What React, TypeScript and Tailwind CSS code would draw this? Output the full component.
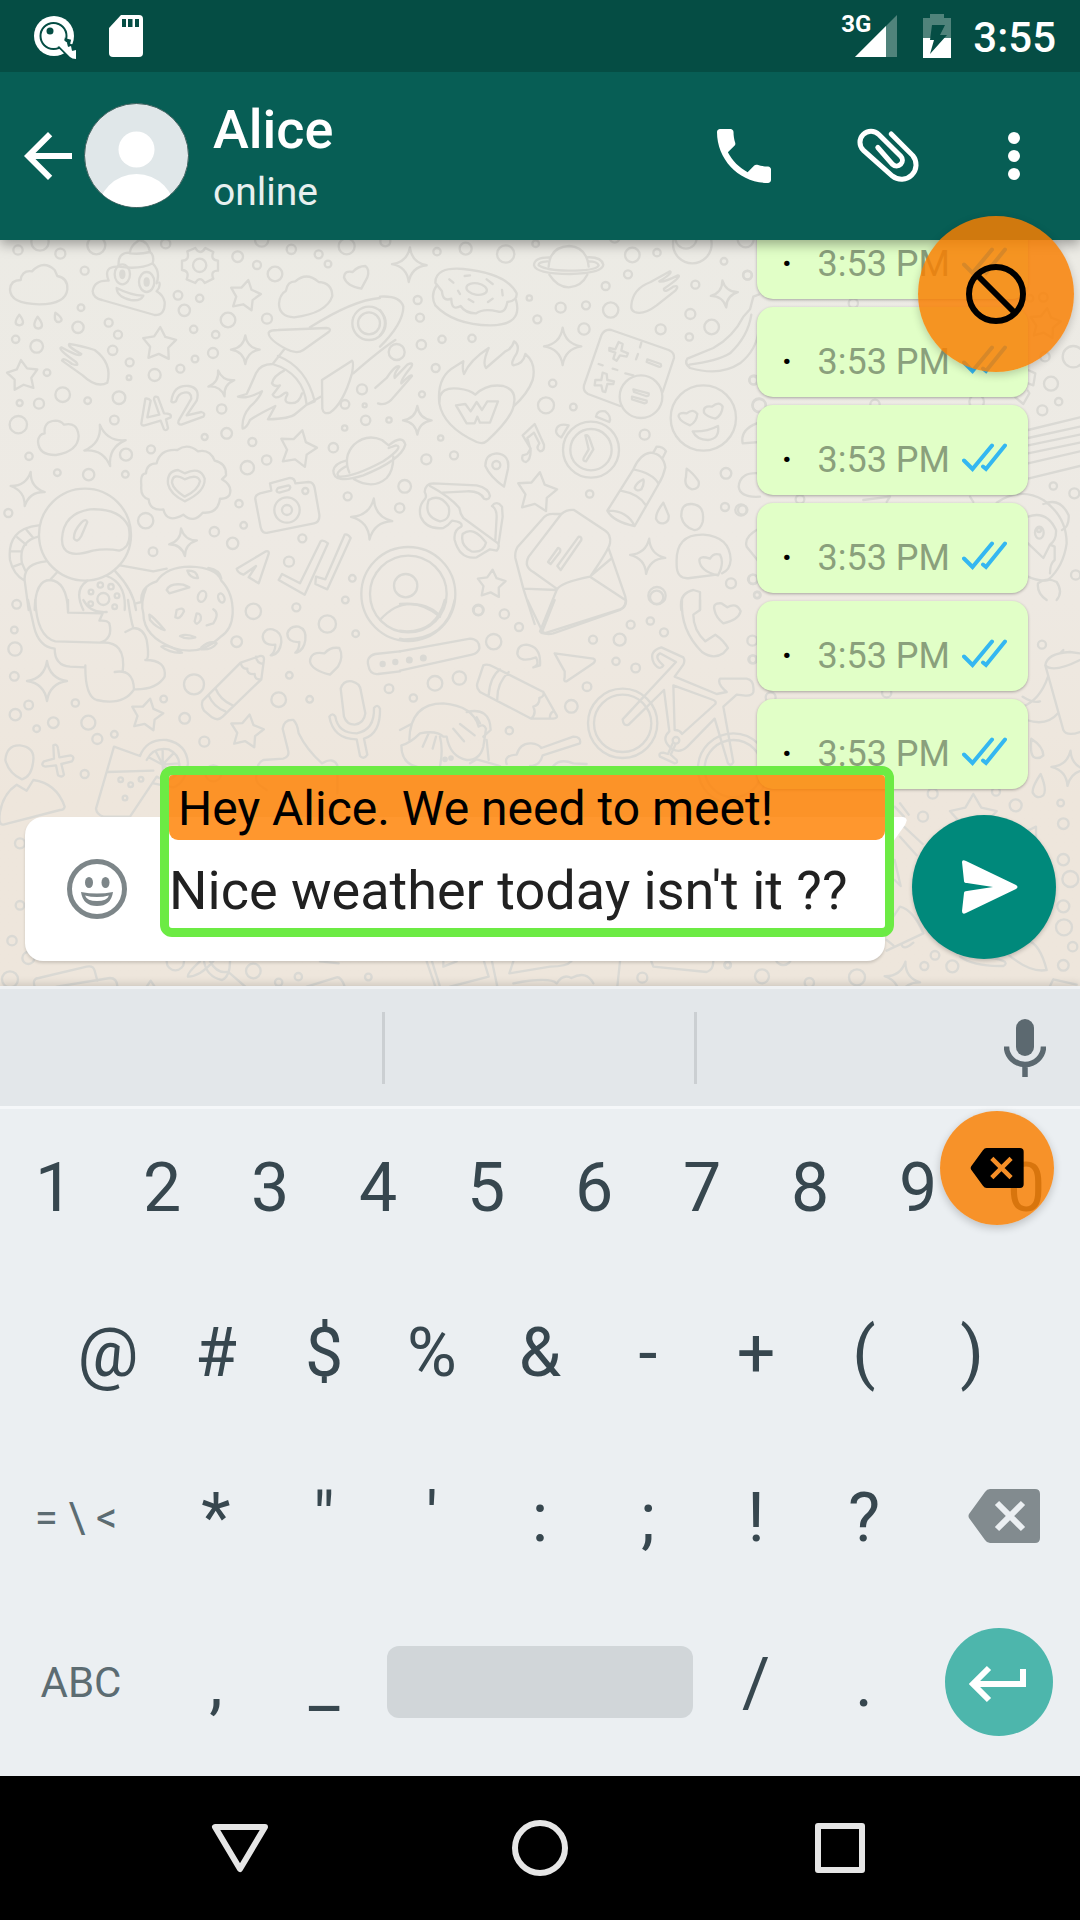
import React from "react";

type Spot = [number, number, number];
type Turned = [number, number, number, number];

const starPath = (r: number) => {
  let d = "";
  for (let i = 0; i < 10; i++) {
    const a = (Math.PI / 5) * i - Math.PI / 2;
    const k = i % 2 ? r * 0.55 : r;
    d += `${i ? "L" : "M"}${(Math.cos(a) * k).toFixed(1)} ${(Math.sin(a) * k).toFixed(1)}`;
  }
  return d + "Z";
};

const sparklePath = (r: number) => {
  const q = r * 0.13;
  return `M0 ${-r}Q${q} ${-q} ${r} 0Q${q} ${q} 0 ${r}Q${-q} ${q} ${-r} 0Q${-q} ${-q} 0 ${-r}Z`;
};

function Patch({ x, y, dots, stars = [], sparkles = [], children }: {
  x: number; y: number; dots: Spot[]; stars?: Turned[]; sparkles?: Turned[]; children?: React.ReactNode;
}) {
  return (
    <g transform={`translate(${x} ${y}) scale(0.33333)`}>
      {dots.map(([cx, cy, r], i) => <circle key={i} cx={cx} cy={cy} r={r} />)}
      {stars.map(([cx, cy, r, a], i) => <path key={i} d={starPath(r)} transform={`translate(${cx} ${cy}) rotate(${a})`} />)}
      {sparkles.map(([cx, cy, r, a], i) => <path key={i} d={sparklePath(r)} transform={`translate(${cx} ${cy}) rotate(${a})`} />)}
      {children}
    </g>
  );
}

function Wallpaper() {
  return (
    <svg aria-hidden="true" viewBox="0 240 1080 746" preserveAspectRatio="xMidYMin slice" className="absolute inset-0 size-full" fill="none" stroke="#dad9d4" strokeWidth="7" strokeLinejoin="round" strokeLinecap="round">
      <Patch x={0} y={230}
        dots={[[54,60,14],[120,36,26],[181,71,15],[289,46,27],[497,41,14],[713,80,16],[785,30,20],[874,58,14],[956,73,12],[984,102,10],[1040,49,24],[254,122,12],[771,105,12],[825,132,22],[534,196,13],[599,205,11],[553,241,17],[243,233,10],[234,292,17],[326,278,12],[354,314,12],[684,270,22],[801,266,15],[581,298,11],[647,314,11],[47,328,11],[110,349,19],[338,361,14],[389,397,12],[639,369,15],[585,387,10],[541,416,12],[464,435,18],[387,443,7],[141,428,10],[188,494,22],[59,519,9],[117,521,15],[263,512,10],[357,503,19],[1086,478,15],[1035,523,13],[1094,526,6],[1097,571,14],[665,537,14],[343,570,13],[55,584,26],[680,610,16],[614,621,9],[1034,594,8],[757,636,12],[378,674,18],[453,658,12],[87,679,11],[172,728,10],[266,734,17],[376,733,10],[1000,653,14],[800,690,14],[742,713,20],[25,849,12],[717,821,11],[437,872,23],[731,886,10],[1043,799,12],[643,905,14],[907,925,12],[698,940,17],[459,965,13],[867,995,15],[1057,1045,10],[1036,1110,10]]}
        stars={[[735,197,48,12],[478,343,52,3],[68,438,48,-6],[893,657,58,14]]}
        sparkles={[[736,359,43,0],[664,460,40,-14],[315,646,64,-14],[83,777,52,10],[549,937,42,-8],[1115,867,62,6]]}>
        {/* clouds and rain */}
        <path d="M62 150Q66 120 96 124Q130 88 164 120L172 138Q204 144 202 178Q198 222 118 223Q30 222 30 178Q32 150 62 150Z" />
        <path d="M858 182Q862 154 886 154Q920 124 956 156Q996 158 997 198Q980 250 882 262Q838 260 837 222Q838 194 858 182Z" />
        <path d="M134 610Q130 574 166 572Q182 572 192 584Q232 574 236 618Q234 664 168 675Q116 676 114 634Q116 612 134 610Z" />
        <path d="M58 254Q36 284 58 286Q80 284 58 254ZM113 260Q92 292 115 296Q138 292 113 260ZM166 248Q160 278 178 276Q196 270 166 248Z" />
        {/* smiling swirl */}
        <path d="M326 152Q282 150 278 184Q280 204 306 210L464 255Q496 256 494 216Q490 196 470 184Q482 170 478 158M326 152Q308 108 356 110Q352 66 390 68Q390 48 418 30Q444 34 450 66Q464 76 458 100Q482 124 470 160M390 70Q420 74 450 66M356 110Q420 120 458 100M350 174Q392 196 430 197Q422 214 392 210Q350 200 350 174Z" />
        <ellipse cx="367" cy="133" rx="23" ry="30" /><ellipse cx="440" cy="156" rx="23" ry="30" />
        <g fill="#dad9d4"><ellipse cx="367" cy="133" rx="6" ry="11" /><ellipse cx="440" cy="156" rx="6" ry="11" /></g>
        {/* gear */}
        <circle cx="599" cy="106" r="20" />
        <path d="M586 54Q600 78 616 54L640 66Q630 90 654 92V122Q630 122 640 146L614 159Q600 136 586 159L560 148Q570 122 546 120V92Q570 92 562 64Z" />
        <path d="M1032 142Q1034 120 1058 126Q1074 108 1096 108Q1110 118 1102 142L1084 176Q1040 168 1032 142Z" />
        {/* hand */}
        <path d="M186 392L248 436Q290 476 322 458Q338 400 284 360Q240 346 208 342Q200 348 244 372Q240 384 184 352Q170 356 228 396Q240 410 216 402Q190 380 186 392Z" />
        {/* rocket */}
        <path d="M930 292Q1060 210 1140 204M1060 430Q1140 360 1186 330M806 308Q810 300 834 300L980 294Q996 296 986 306L910 360Q890 374 860 358Q804 328 806 308ZM854 356L818 402M834 378Q920 412 944 514L920 524Q910 430 818 402Q780 402 768 430Q746 480 740 492L714 500Q740 508 786 484Q776 508 750 530Q724 560 728 596Q740 594 750 570Q780 550 826 528L804 568Q870 566 886 552L920 524L962 500M966 450L1056 392Q1062 396 1056 430Q1030 520 990 548Q970 554 967 536ZM852 422Q820 438 816 460Q824 472 840 466L818 494Q824 508 842 498Q864 480 862 494Q850 514 864 518Q896 526 906 490" />
        <circle cx="1107" cy="280" r="50" /><circle cx="1107" cy="280" r="33" />
        {/* number */}
        <path d="M436 506L424 580Q424 588 434 586L482 572L492 598Q500 604 504 594L498 568L512 562Q516 550 492 550L474 502Q462 496 462 508L478 554L442 562L452 512Q446 504 436 506ZM514 514Q520 464 566 468Q602 474 590 512L560 556L604 546Q618 550 610 560L544 584Q532 584 536 572L574 506Q574 484 552 488Q534 490 528 514Q518 520 514 514Z" />
        {/* scalloped badge */}
        <path d="M532 660Q562 638 594 664Q630 656 644 692Q680 700 678 736L666 748Q700 768 688 796Q678 808 660 806Q654 852 608 848Q580 882 550 854Q500 882 490 838Q450 844 446 808Q420 800 424 766Q420 730 438 730Q440 700 470 700Q480 656 532 660Z" />
        <path d="M504 762Q500 724 534 720L554 730Q600 708 614 746Q616 786 554 814Q510 792 504 762ZM516 758Q518 726 554 748Q594 730 600 754Q594 782 554 800Q520 778 516 758Z" />
        {/* camera */}
        <path d="M780 790L814 782L810 760L870 744Q884 744 886 760L926 756Q940 756 944 774L958 854Q960 876 942 880L804 908Q786 912 782 892L766 808Q764 796 780 790ZM834 774L866 766Q876 770 866 780L838 788Q824 786 834 774Z" />
        <circle cx="861" cy="840" r="38" /><circle cx="861" cy="840" r="15" /><circle cx="916" cy="783" r="9" />
        {/* ringed planet */}
        <path d="M1048 728Q1028 680 1062 644Q1100 610 1146 630L1166 646Q1208 612 1216 644Q1204 690 1090 736Q1000 764 1000 722Q1004 700 1038 692M1040 708Q1000 730 1018 740Q1060 742 1150 694Q1214 650 1188 646L1166 654M1062 748Q1120 780 1160 744Q1180 722 1180 680" />
        {/* astronaut */}
        <circle cx="255" cy="914" r="138" />
        <path d="M186 926Q190 850 270 838Q360 834 386 890Q398 950 358 962Q320 954 278 962Q184 992 186 926ZM244 878Q220 904 222 926Q232 940 244 918L262 876Q258 864 244 878ZM116 886Q20 896 30 990Q40 1034 74 1052M116 920Q54 934 66 1000L76 1022M80 900L100 924M52 922L78 944M34 964H62M40 1010L66 1000M138 994Q70 1000 74 1052L86 1140M104 1140Q106 1050 150 1050Q200 1054 204 1140M150 1050L172 1026M262 1052Q220 1080 250 1140M320 1038Q380 1060 374 1140M346 1024Q400 1080 408 1140M360 1006L460 1024L500 1016" />
        <circle cx="310" cy="1107" r="18" /><circle cx="301" cy="1065" r="8" /><circle cx="333" cy="1070" r="8" /><circle cx="351" cy="1097" r="7" /><circle cx="344" cy="1130" r="7" /><circle cx="273" cy="1086" r="7" /><circle cx="272" cy="1121" r="7" />
        {/* cookie */}
        <path d="M408 1120L424 1116Q420 1070 470 1054Q500 1010 570 1010Q650 1012 664 1052Q700 1090 698 1150Q696 1200 660 1222Q600 1280 520 1254Q430 1220 430 1150Q420 1120 440 1070M500 1080Q510 1058 550 1064L568 1072L548 1078L508 1090ZM562 1022Q590 1020 594 1044Q570 1046 562 1022ZM625 1014Q660 1020 664 1046" />
        <ellipse cx="606" cy="1099" rx="12" ry="17" transform="rotate(20 606 1099)" /><ellipse cx="664" cy="1104" rx="9" ry="14" transform="rotate(-20 664 1104)" />
        {/* ticks */}
        <path d="M710 1016L798 964Q808 962 806 972L776 1060L746 1042L768 1008L730 1034Q712 1028 710 1016ZM836 1050L846 1032L900 1060L962 934Q968 928 984 940L914 1094ZM948 1040L976 1048L1034 914Q1042 910 1052 924L982 1078L946 1062Z" />
      </Patch>
      <Patch x={380} y={230}
        dots={[[16,34,15],[171,65,11],[257,56,18],[377,72,26],[467,41,10],[704,24,14],[757,75,22],[831,68,11],[1032,94,10],[1097,28,24],[1103,136,13],[744,133,12],[677,168,12],[946,164,12],[448,204,8],[113,210,12],[120,263,12],[542,233,15],[618,226,12],[692,240,23],[472,268,12],[931,252,15],[612,297,17],[842,298,15],[995,291,22],[186,328,11],[276,325,11],[124,344,14],[50,366,24],[928,321,11],[167,414,12],[126,493,9],[518,460,11],[498,526,24],[580,531,10],[1122,450,14],[1137,525,20],[27,570,8],[182,624,8],[139,688,15],[222,676,12],[794,614,15],[74,769,19],[1038,730,16],[629,792,11],[59,834,14],[1035,831,12],[1083,840,17],[831,1097,26],[1053,1060,15],[1118,1048,14],[1131,1095,9],[295,1140,16]]}
        stars={[[470,788,62,9],[334,1063,44,5]]}
        sparkles={[[88,104,52,2],[548,349,56,0],[1033,192,41,-8],[112,571,43,0],[803,979,53,5]]}>
        {/* rocket nose */}
        <path d="M0 200Q60 196 70 230Q70 280 0 350M0 240Q30 280 0 316" />
        {/* doughnut */}
        <path d="M166 158Q166 110 250 117Q380 130 410 190Q412 212 382 216Q376 252 352 244Q310 234 288 250Q256 250 242 228Q214 244 214 206Q188 216 186 184ZM170 166Q150 196 166 226Q220 284 330 286Q430 286 408 210M208 148L220 158M254 138L270 136M320 148L338 162M366 180L368 196M234 182L240 192M266 208L280 216M324 216L338 206" />
        <ellipse cx="290" cy="177" rx="31" ry="17" transform="rotate(10 290 177)" />
        {/* saturn */}
        <path d="M506 110Q510 50 568 48Q620 52 626 110M508 82Q462 82 462 106Q468 132 570 132Q668 130 670 104Q664 80 622 82M502 94Q474 96 476 106Q500 122 566 122Q650 122 656 106Q652 94 626 94M508 134Q532 172 566 172Q604 170 622 134" />
        <circle cx="937" cy="42" r="58" /><circle cx="918" cy="24" r="32" />
        {/* hands */}
        <path d="M754 226Q758 176 812 156L870 124Q880 128 838 154Q850 158 894 136Q908 138 852 176Q850 192 880 170Q900 164 886 182L830 226Q790 256 764 246Q752 240 754 226Z" />
        <path d="M-6 520Q20 530 42 500L96 438Q94 430 64 460Q60 452 94 410Q102 394 82 404L44 444Q40 432 58 410Q48 402 20 444L-14 474" />
        {/* banana */}
        <path d="M922 386L1000 354Q1060 320 1090 260L1110 238L1120 200L1136 194M922 386Q912 400 930 414Q1020 440 1080 400Q1130 360 1136 300M928 404Q1010 394 1050 370Q1104 320 1114 254" />
        {/* flaming heart */}
        <path d="M178 520Q170 440 224 410L250 394Q246 420 252 432Q270 390 326 354Q306 400 318 414L376 364Q396 356 402 334Q420 346 410 370Q390 400 400 406Q430 402 436 372Q470 400 458 450Q444 490 400 530M180 498Q190 470 236 476Q270 480 286 494Q320 460 370 468Q410 480 402 520Q400 560 322 632Q310 644 290 636Q190 590 178 520ZM228 526L256 522L272 544L290 516L306 540L322 514H354L330 578H300L292 560L284 580H260Z" />
        {/* calculator */}
        <path d="M720 528L624 492Q608 484 612 466L664 316Q674 296 694 300L866 360Q884 368 882 384L848 486M784 338L780 352M774 372L768 388M656 402L668 406M698 416L712 420M736 430L760 436" />
        <path d="M688 354L706 358L716 336L728 342L724 362L744 370L740 380L720 376L710 392L700 386L706 368L688 362ZM646 450L664 450L668 428L680 432L682 450L702 454L700 462L682 462L676 486L668 484L664 466L644 466ZM802 388L842 402Q846 412 836 410L800 396ZM760 478L806 490Q808 500 798 498L762 486ZM756 500L800 512Q802 520 794 520L756 508Z" />
        <circle cx="783" cy="500" r="64" />
        {/* loving face */}
        <circle cx="970" cy="564" r="98" />
        <path d="M896 560Q894 546 920 550Q940 534 952 552Q950 576 930 586Q902 576 896 560ZM972 548Q968 526 996 530Q1018 512 1028 530Q1026 556 1006 566Q980 560 972 548ZM938 604Q980 606 1014 588Q1020 626 984 630Q950 630 938 604Z" />
        {/* stopwatch */}
        <circle cx="633" cy="659" r="84" /><circle cx="633" cy="659" r="62" />
        <path d="M648 560Q650 540 676 544Q696 560 688 576ZM528 604Q530 578 566 586L544 622Q530 616 528 604ZM616 616Q626 614 630 630L640 658L618 694Q606 694 612 682L626 658Z" />
        {/* music */}
        <path d="M442 672L452 656L428 616L464 582L492 644Q494 664 480 664Q466 656 478 640L462 608L442 624L452 660Q452 690 438 696Q422 694 428 676Z" />
        {/* pin */}
        <circle cx="349" cy="705" r="12" /><path d="M316 708Q316 672 350 670Q390 674 384 716L372 770Q330 740 316 708Z" />
        {/* glasses */}
        <path d="M134 786Q136 760 160 760L290 766Q326 774 330 798Q326 812 312 806Q300 782 260 784L188 788M134 786Q142 800 134 808Q114 830 122 860Q140 900 190 894Q206 886 216 872Q250 876 244 890Q220 900 224 930Q240 990 290 982L330 958L350 962Q360 950 354 940L250 864Q240 850 238 834Q210 800 150 768M336 828Q350 810 366 830L368 860L356 940M336 828Q350 836 350 860L346 930" />
        <path d="M146 810Q180 790 206 830Q214 870 180 874Q130 860 146 810ZM248 912Q280 886 318 938Q310 970 274 964Q240 946 248 912Z" />
        {/* tube */}
        <path d="M682 842L760 718Q780 672 812 668Q850 672 856 712Q850 740 836 762L764 888Q700 876 682 842ZM682 842Q740 840 764 888M760 718Q820 730 836 762M722 782Q776 792 796 824M820 668L830 650Q850 650 858 664L848 684M790 748Q770 756 764 774Q770 786 784 778Q794 760 790 748Z" />
        <path d="M920 716Q940 730 956 754Q960 778 936 778Q910 770 918 740ZM850 818Q828 846 828 866Q834 882 850 880Q868 876 866 856Z" />
        <path d="M904 860Q902 820 936 822Q976 826 968 876Q960 902 942 900Q910 890 904 860ZM1130 580Q1080 600 1088 640L1140 636M1140 730Q1080 724 1076 770Q1080 804 1140 800M890 1000Q886 912 970 914Q1050 920 1052 990Q1050 1020 1026 1030M890 1000Q888 1050 930 1044L1010 1034M958 990Q960 976 990 986Q1000 968 1020 974Q1034 1000 1014 1036Q960 1024 958 990ZM904 1140Q896 1090 940 1080L960 1086V1140M1140 894Q1090 920 1100 950L1140 1000" />
        {/* letter */}
        <path d="M544 852H524Q500 850 488 866L412 952Q404 966 406 984L430 1076L464 1182M544 852Q560 838 582 840L676 902Q694 914 690 940Q686 960 632 1038M544 852L446 980Q430 1010 460 1026L530 1076M686 956L736 1100Q742 1130 720 1138L500 1208Q486 1214 480 1204L530 1080Q540 1058 630 1040L736 1110M430 1076L530 1080M634 1036L696 984M504 996L534 954Q544 956 540 966L512 1002ZM532 1008L596 920Q606 920 604 930L542 1020Z" />
        {/* badge */}
        <circle cx="85" cy="1092" r="141" /><circle cx="85" cy="1092" r="115" /><circle cx="77" cy="1067" r="35" />
        <path d="M0 1170Q80 1080 180 1160" />
      </Patch>
      <Patch x={0} y={600}
        dots={[[50,13,13],[43,90,10],[45,147,20],[43,229,13],[760,34,23],[889,22,12],[982,72,26],[1067,101,10],[710,125,16],[582,253,30],[868,226,10],[226,309,11],[86,315,13],[46,344,17],[160,368,16],[110,386,10],[265,368,21],[292,417,15],[343,403,10],[491,297,10],[554,355,16],[836,299,22],[929,298,10],[1167,266,13],[613,425,15],[254,522,12],[60,730,15],[60,916,13],[36,1022,14],[85,1074,18],[30,1138,24],[526,1085,26],[760,1113,22],[895,1130,11],[836,1147,11],[1105,1131,10],[640,520,24],[362,539,7],[392,554,7],[423,538,7],[375,594,7]]}
        stars={[[440,345,50,12],[740,395,52,10]]}
        sparkles={[[141,243,60,0]]}>
        <path d="M84 0L102 80Q116 140 164 146Q164 196 210 200L256 202Q256 290 290 300Q370 318 402 268Q470 270 494 230Q500 180 436 180Q450 180 440 120Q430 84 400 84L376 96M106 0Q110 110 166 124L300 128Q340 116 328 70Q322 60 298 62L308 40L204 38V0M300 128Q380 120 368 216M256 202V196M344 216Q400 206 402 268M384 0Q392 60 400 84M250 0Q270 40 320 36" />
        <path d="M530 30Q550 20 552 34Q540 60 526 52ZM590 40Q606 40 602 60Q590 80 584 64ZM640 28Q660 40 640 70L620 76M448 44Q460 50 494 90Q470 84 450 60ZM540 108Q560 100 586 112Q560 120 540 108ZM484 140Q500 130 546 158Q510 160 484 140ZM604 142Q630 120 650 130Q636 150 604 148Z" />
        {/* quotes */}
        <path d="M812 166Q826 156 826 134Q790 138 788 110Q792 84 818 88Q846 96 844 126Q840 160 816 166ZM886 158Q898 150 898 126Q862 128 862 100Q870 76 896 80Q920 88 916 120Q912 150 890 158Z" />
        <path d="M930 184Q932 152 974 160Q990 140 1018 144Q1032 170 1014 200L990 224Q934 210 930 184Z" />
        {/* pencil */}
        <path d="M608 302L722 188L780 168Q792 166 792 178L784 238L668 350Q654 364 636 352L612 332Q602 316 608 302ZM722 188Q726 208 742 206Q740 224 764 222Q764 240 782 238M768 170Q770 190 790 192M646 264Q660 300 698 316M626 286Q640 320 676 334" />
        {/* microphone */}
        <path d="M1022 266Q1030 240 1056 244Q1080 250 1082 270L1096 340Q1092 370 1064 374Q1040 374 1032 350ZM988 350Q998 336 1006 350Q1014 400 1070 400Q1124 390 1122 324Q1132 310 1140 326Q1142 400 1092 416L1102 464Q1092 480 1080 468L1070 418Q1000 418 988 350Z" />
        {/* thumb */}
        <path d="M774 510Q770 490 790 480L850 476Q870 470 864 450L848 386Q852 358 880 360Q892 370 896 400Q920 450 966 490Q1000 470 1012 496L1012 580M774 510Q760 540 780 556L800 570" />
        {/* person and plus */}
        <path d="M16 480Q20 434 60 436Q104 442 100 480Q96 530 66 538Q26 520 16 480ZM0 636Q10 580 50 554L80 572L100 540Q170 550 194 620Q192 630 180 630L10 674Q-6 676 0 636Z" />
        <path d="M160 436Q172 430 174 446L178 472L212 466Q226 470 216 484L184 492L192 524Q186 534 174 526L168 496L136 500Q120 496 132 484L162 476Z" />
        {/* glass with lemon slice */}
        <path d="M342 440L420 468M342 440L288 626Q290 644 310 650H390L470 530M322 516L460 512M420 468Q440 416 500 420Q560 432 564 490Q556 550 520 562L460 550M440 480Q460 440 506 448Q540 464 538 500Q530 540 490 540L470 530M488 494V450M488 494L520 460M488 494L536 490M488 494L526 526M488 494L490 536M488 494L450 474M488 494L468 456" />
        <path d="M1106 200Q1096 170 1126 162L1200 154M1106 200Q1110 224 1134 222L1200 214" />
        <g fill="#dad9d4"><circle cx="1148" cy="192" r="6" /><circle cx="1186" cy="186" r="6" /></g>
        <path d="M104 1160Q96 1136 116 1134L260 1100Q280 1096 284 1112L292 1142M170 1160L330 1134Q350 1134 352 1158M564 1130Q560 1120 600 1084M564 1130Q600 1130 640 1084M612 1084Q620 1130 666 1140Q690 1130 690 1084M690 1120L736 1160M630 1084Q650 1120 680 1116M920 1160L1010 1132Q1024 1130 1034 1160M440 1160L452 1142L464 1160M960 1084L1016 1090" />
      </Patch>
      <Patch x={400} y={600}
        dots={[[235,31,14],[313,42,14],[357,81,12],[281,125,23],[579,119,12],[659,119,18],[692,74,12],[751,63,11],[792,97,12],[770,-8,20],[648,184,11],[707,204,13],[105,250,22],[178,234,20],[561,260,13],[514,319,19],[40,294,11],[328,392,11],[1057,122,15],[1060,178,12],[727,1133,15],[983,1095,9],[828,421,10]]}>
        <path d="M0 154L210 116Q240 118 238 146Q234 160 216 164L0 212M400 202Q420 196 408 172Q360 190 352 162Q352 134 380 134Q424 140 420 196ZM464 160L580 176Q590 180 580 190L500 244Q490 246 494 232V214Q480 190 464 160Z" />
        <g fill="#dad9d4"><circle cx="28" cy="180" r="7" /><circle cx="70" cy="174" r="7" /></g>
        <path d="M250 196Q262 190 280 200L430 276L470 346Q474 354 460 356H394L240 276Q228 264 232 250ZM300 208Q270 230 266 286M326 216Q290 250 292 300M430 276Q434 290 418 294Q420 314 400 320Q410 340 394 356M460 334Q448 340 450 356" />
        {/* shy face */}
        <path d="M28 420Q30 310 130 310Q220 318 236 380Q250 370 258 386L250 440Q240 480 200 480Q150 470 140 410L130 410Q110 390 60 400Q30 430 4 436Q4 490 50 500M120 410Q130 450 120 498M0 390L34 372M200 336Q270 320 272 390L250 410M86 400L68 440M108 410L98 446M160 386L192 424M180 372L224 406M260 420L266 480M210 490L230 478L300 498M240 370L230 352" />
        <g fill="#dad9d4"><circle cx="135" cy="478" r="5" /><circle cx="153" cy="474" r="5" /></g>
        {/* key */}
        <path d="M320 492Q310 466 350 464Q360 428 394 430Q416 432 424 444L520 410Q544 410 540 430L428 466Q420 498 390 498M460 498Q480 474 520 490L560 492" />
        {/* phone */}
        <path d="M846 0Q840 90 906 156Q940 180 970 160L984 144Q970 120 946 104L916 124Q880 90 880 44L900 30V0" />
        <path d="M944 32Q936 8 964 10L982 22Q1010 6 1022 34Q1016 60 970 70Q948 52 944 32Z" />
        {/* bicycle */}
        <circle cx="668" cy="370" r="104" /><circle cx="668" cy="370" r="86" /><circle cx="1000" cy="506" r="106" /><circle cx="1000" cy="506" r="86" />
        <path d="M668 358L828 186L780 160Q760 170 790 196Q780 214 762 190Q744 154 784 142L850 172Q856 182 850 194L824 230L950 282L980 276Q950 250 960 236H1040Q1064 240 1060 276Q1056 290 1030 286L1010 284L970 320L1000 486Q994 500 984 490L944 356L862 440Q840 460 818 448Q780 420 808 394L792 270L686 374Q670 380 668 358ZM820 256L824 390Q840 390 846 402L946 312Q950 304 940 300ZM826 434L812 464L830 480Q834 490 824 490L780 470Q774 458 790 458L804 462L818 430" />
        <path d="M382 0L428 96Q440 106 460 100L660 30Q680 20 678 0M464 0L426 96M164 0Q140 120 10 118L0 116M134 0Q110 94 20 94L0 92M116 44Q80 6 0 12" />
        <path d="M80 1084L106 1160M96 1084L120 1160M130 1084V1100L170 1084M252 1084L266 1130L150 1160M276 1084L292 1160M340 1084L328 1120L450 1100Q500 1100 514 1084M340 1150Q450 1130 470 1150Q490 1120 514 1134Q560 1110 580 1150M754 1084L760 1100L920 1116Q940 1110 940 1084M660 1084L652 1160" />
      </Patch>
      <Patch x={740} y={200}
        dots={[[22,225,13],[58,617,20],[40,541,12],[8,930,14],[40,1138,14],[52,1185,10],[340,310,14],[405,613,14],[180,898,13],[710,605,22],[910,292,13],[915,470,14],[1000,470,32],[933,551,21],[956,605,11],[907,631,15],[940,858,11],[1003,880,15],[1007,1125,14],[870,295,10]]}
        stars={[[915,372,48,8]]}>
        <path d="M864 690L1020 652M864 714L1020 680M864 736L1020 704M864 760L1020 728M864 790L1020 754M864 836L1020 798M864 510L886 520L880 556L864 550M864 572L868 580L850 612L826 592" />
        {/* bear */}
        <path d="M770 908Q840 860 910 900Q980 950 980 1030Q970 1100 924 1140Q900 1146 864 1130M910 912Q960 890 986 946Q988 980 966 990M864 950Q920 930 948 990Q950 1020 930 1034L944 1040V1080Q930 1090 930 1120M864 1030L910 1074L930 1034" />
        <ellipse cx="898" cy="998" rx="13" ry="18" /><circle cx="897" cy="990" r="6" />
        <path d="M894 1150Q920 1130 950 1146Q970 1176 950 1200M894 1150Q890 1180 920 1200M370 900L450 890L440 906M690 890L700 906" />
      </Patch>
      <Patch x={720} y={640}
        dots={[[966,14,12],[97,58,12],[152,172,15],[500,158,14],[638,461,15],[828,455,12],[887,496,18],[1022,489,10],[1030,551,16],[609,530,15],[1030,659,17],[1051,717,24],[1030,799,18],[1032,862,24],[1058,920,14],[1030,976,16],[697,979,18],[645,946,13],[613,978,12],[126,1009,21],[411,1012,24],[268,1028,14],[23,975,10],[190,950,25]]}
        sparkles={[[1047,385,53,5],[547,1018,54,10]]} stars={[[760,536,74,0]]}>
        {/* cup */}
        <path d="M976 76Q980 40 1050 36L1080 40M976 76Q1000 100 1080 60M976 76L1030 270Q1040 290 1080 276M984 110Q960 180 908 200L920 240Q980 260 1014 220M908 170Q940 190 960 184M1020 40L1030 30" />
        <path d="M934 296Q970 320 970 346Q956 360 940 350Q930 340 934 296ZM962 402Q936 440 938 458Q950 480 970 466Q982 450 962 402Z" />
        <path d="M552 560L608 612M540 590L590 646M524 500L552 530M540 490L566 524M524 660L542 738L524 720M500 860L540 800Q580 810 610 880L500 932M500 900L520 916M544 912Q550 934 580 908M920 900Q960 910 980 990Q930 1000 860 940M720 950Q760 980 850 978Q880 960 780 950M908 580L948 560V600M1000 1018L1070 1034M1000 1018L990 1038" />
      </Patch>
    </svg>
  );
}

function StatusBar() {
  return (
    <div className="flex h-[72px] items-center bg-[#054d44] pr-6 pl-[34px] text-white">
      <svg aria-hidden="true" className="mt-1 h-[46px] w-[44px]" viewBox="0 0 44 46">
        <circle cx="20" cy="21" r="20" fill="#fff" />
        <circle cx="19.500" cy="21" r="13" fill="none" stroke="#054d44" strokeWidth="2" />
        <path d="M25 31L36 42Q38 44 42 44V35L38 34V31L34 30L35 26L31 25L28 22Z" fill="#fff" stroke="#054d44" strokeWidth="3.500" />
        <path d="M23 29L36 42Q38 44 42 44V35L38 36L37 31L34 32L33 28L29 24Z" fill="#fff" />
        <circle cx="19.500" cy="21" r="11.500" fill="#fff" /><circle cx="16" cy="16" r="3.500" fill="#054d44" />
      </svg>
      <svg aria-hidden="true" className="ml-[31px] h-[42px] w-[34px]" viewBox="0 0 34 42">
        <path d="M12 0H30Q34 0 34 4V38Q34 42 30 42H4Q0 42 0 38V13Z" fill="#fff" />
        <path d="M13 4H17V12H13ZM19 4H23.500V12H19ZM26 4H30V12H26Z" fill="#054d44" />
      </svg>
      <span className="-mr-4 mb-6 ml-auto text-[24px] leading-6 font-bold">3G</span>
      <svg aria-hidden="true" className="h-[42px] w-[42px]" viewBox="0 0 42 42">
        <path d="M42 0V42H0Z" fill="#50837b" /><path d="M31 11V42H0Z" fill="#fff" />
      </svg>
      <svg aria-hidden="true" className="ml-[26px] h-[44px] w-[28px]" viewBox="0 0 28 44">
        <path d="M7 0H21V4H28V44H0V4H7Z" fill="#50837b" /><path d="M0 24H28V44H0Z" fill="#fff" />
        <path d="M9 11H22L17 21H24L7 40L11 26H7Z" fill="#054d44" />
      </svg>
      <span className="mt-[3px] ml-[22px] text-[42px] leading-[48px] font-medium">3:55</span>
    </div>
  );
}

function Header() {
  return (
    <header className="relative z-20 shrink-0 bg-[#075e55] shadow-[0_4px_12px_rgba(0,0,0,0.35)]">
      <StatusBar />
      <div className="flex h-[168px] items-center pr-[30px] pl-3 text-white">
        <button aria-label="Back" className="size-[72px]">
          <svg viewBox="0 0 24 24" className="size-full" fill="currentColor"><path d="M20 11H7.830l5.590-5.590L12 4l-8 8 8 8 1.410-1.410L7.830 13H20v-2z" /></svg>
        </button>
        <svg role="img" aria-label="Alice's picture" className="mb-[2px] size-[105px]" viewBox="0 0 105 105">
          <defs><clipPath id="face"><circle cx="52.500" cy="52.500" r="51.500" /></clipPath></defs>
          <circle cx="52.500" cy="52.500" r="52" fill="#e0e7e9" stroke="#3c5f5c" strokeWidth="1" />
          <g clipPath="url(#face)" fill="#fff"><circle cx="52.500" cy="46.500" r="18" /><ellipse cx="52.500" cy="110" rx="39" ry="39" /></g>
        </svg>
        <div className="ml-6 flex flex-col gap-[5px] pt-[3px]">
          <h1 className="text-[54px] leading-[64px] font-medium">Alice</h1>
          <p className="text-[39px] leading-[50px] text-[#e8f0ef]">online</p>
        </div>
        <button aria-label="Call" className="mr-[73px] ml-auto size-[72px]">
          <svg viewBox="0 0 24 24" className="size-full" fill="currentColor"><path d="M6.620 10.790c1.440 2.830 3.760 5.140 6.590 6.590l2.200-2.200c.27-.27.67-.36 1.020-.24 1.120.37 2.330.57 3.570.57.55 0 1 .45 1 1V20c0 .55-.45 1-1 1-9.390 0-17-7.610-17-17 0-.55.45-1 1-1h3.500c.55 0 1 .45 1 1 0 1.250.2 2.450.57 3.570.11.35.03.74-.25 1.020l-2.200 2.200z" /></svg>
        </button>
        <button aria-label="Attach" className="mr-[53px] size-[72px]">
          <svg viewBox="0 0 72 72" className="size-full" fill="none" stroke="currentColor" strokeWidth="5" strokeLinecap="round">
            <path d="M38.200 14L59.800 35.600A14.500 14.500 0 0 1 39.400 56L10.200 30.100A11 11 0 0 1 25.800 14.500L47.800 36.200A5.800 5.800 0 0 1 39.600 44.400L24.800 27.500" />
          </svg>
        </button>
        <button aria-label="More options" className="size-[72px]">
          <svg viewBox="0 0 72 72" className="size-full" fill="currentColor"><circle cx="36" cy="18" r="6" /><circle cx="36" cy="36" r="6" /><circle cx="36" cy="54" r="6" /></svg>
        </button>
      </div>
      <button aria-label="Disable encryption" className="absolute right-[6px] -bottom-[132px] flex size-[156px] items-center justify-center rounded-full bg-[rgba(249,126,0,0.83)] shadow-[0_3px_8px_rgba(0,0,0,0.2)]">
        <svg viewBox="0 0 60 60" className="size-[60px]" fill="none" stroke="#000" strokeWidth="6"><circle cx="30" cy="30" r="27" /><path d="M11 11L49 49" /></svg>
      </button>
    </header>
  );
}

function Message() {
  return (
    <li className="flex h-[90px] shrink-0 rounded-2xl bg-[#e1ffc7] pr-[21px] pl-6 shadow-[0_1px_3px_rgba(0,0,0,0.3)]">
      <span className="text-[48px] leading-[82px] text-black">.</span>
      <span className="mb-[14px] ml-6 self-end text-[36px] leading-[42px] text-[#8aa07c]">3:53 PM</span>
      <svg role="img" aria-label="Read" className="mb-[22px] ml-3 h-[30px] w-[45px] self-end" viewBox="0 0 45 30" fill="none" stroke="#34b7f1" strokeWidth="4" strokeLinecap="round">
        <path d="M2 17.500L10.500 26L30 2.500M21 23.500L24 26L43 2.500" />
      </svg>
    </li>
  );
}

function Composer() {
  return (
    <form className="relative z-10 mt-7 flex items-center gap-[27px] pr-6 pb-[25px] pl-[25px]" onSubmit={(e) => e.preventDefault()}>
      <div className="relative flex h-36 min-w-0 flex-1 items-center rounded-[18px] bg-white pl-[42px] shadow-[0_2px_3px_rgba(0,0,0,0.15)]">
        <button type="button" aria-label="Emoji" className="size-[60px]">
          <svg viewBox="0 0 60 60" className="size-full" fill="#7d8689">
            <circle cx="30" cy="30" r="27.500" fill="none" stroke="#7d8689" strokeWidth="5" />
            <ellipse cx="22" cy="23.500" rx="4" ry="5.500" /><ellipse cx="38.500" cy="23.500" rx="4" ry="5.500" />
            <path d="M14 33Q30 36 46 33Q44 47 30 47Q16 47 14 33Z" /><path d="M18 36.500Q30 39.500 42 36.500Q40 42 30 42Q20 42 18 36.500Z" fill="#fff" />
          </svg>
        </button>
        <svg aria-hidden="true" className="absolute top-0 -right-[22px] h-[36px] w-[40px]" viewBox="0 0 40 36"><path d="M0 0H36Q42 1 38 8L18 36H0Z" fill="#fff" /></svg>
        <div className="absolute -top-[51px] -right-[9px] left-[135px] h-[171px] rounded-xl border-[9px] border-[#6ceb44]">
          <div className="h-[65px] overflow-hidden rounded-t-sm rounded-b-[9px] bg-[rgba(255,128,0,0.82)] pl-[9px] text-[48px] leading-[68px] whitespace-nowrap text-black">Hey Alice. We need to meet!</div>
          <input aria-label="Message" defaultValue="Nice weather today isn't it ??" className="block h-[88px] w-full bg-transparent pt-3 text-[54px] leading-[64px] text-[#212121] outline-none" />
        </div>
      </div>
      <button aria-label="Send" className="-mt-1 flex size-36 items-center justify-center rounded-full bg-[#00897b] shadow-[0_2px_4px_rgba(0,0,0,0.2)]">
        <svg viewBox="0 0 56 54" className="ml-3 h-[54px] w-14" fill="#fff"><path d="M0 2Q0 -1 4 1L54 25Q57 27 54 29L4 53Q0 55 0 51L2 33Q2 31 5 31L31 27L5 23Q2 23 2 21Z" /></svg>
      </button>
    </form>
  );
}

function Backspace({ fill, cross, className }: { fill: string; cross: string; className: string }) {
  return (
    <svg viewBox="0 0 72 54" className={className}>
      <path d="M22 0H67Q72 0 72 5V49Q72 54 67 54H22Q19 54 17 51L1 29Q0 27 1 25L17 3Q19 0 22 0Z" fill={fill} />
      <path d="M29 14L55 40M55 14L29 40" stroke={cross} strokeWidth="6" />
    </svg>
  );
}

function Key({ children }: { children: string }) {
  return <button className="flex-1 text-center">{children}</button>;
}

function Keyboard() {
  return (
    <section aria-label="Keyboard" className="relative z-10 shrink-0 bg-[#ebeff2] text-[#37474f] shadow-[0_-2px_8px_rgba(0,0,0,0.15)]">
      <div className="grid h-[123px] grid-cols-[382fr_3fr_309fr_3fr_273fr_110fr] items-center border-y-[3px] border-t-[#eff1f3] border-b-[#f5f7f9] bg-[#e3e7ea]">
        <span />
        <span className="h-[72px] bg-[#cbcfd2]" />
        <span />
        <span className="h-[72px] bg-[#cbcfd2]" />
        <span />
        <button aria-label="Voice input" className="justify-self-center">
          <svg viewBox="0 0 42 58" className="h-[58px] w-[42px]" fill="#5c6970"><rect x="12" width="18" height="37" rx="9" /><path d="M2.500 27.500A18.500 18 0 0 0 39.500 27.500M21 45V58" fill="none" stroke="#5c6970" strokeWidth="5.500" /></svg>
        </button>
      </div>
      <div className="pb-[11px] text-[68px] leading-[80px]">
        <div className="relative flex h-[161px] pb-1">
          {[..."1234567890"].map((k) => <Key key={k}>{k}</Key>)}
          <button aria-label="Delete encrypted text" className="absolute top-[2px] right-[26px] flex size-[114px] items-center justify-center rounded-full bg-[rgba(249,126,0,0.83)] shadow-[0_3px_8px_rgba(0,0,0,0.2)]">
            <Backspace fill="#000" cross="#f68f27" className="h-10 w-[54px]" />
          </button>
        </div>
        <div className="flex h-[165px] px-[5%]">
          {[..."@#$%&-+()"].map((k) => <Key key={k}>{k}</Key>)}
        </div>
        <div className="grid h-[165px] grid-cols-[162fr_repeat(7,108fr)_162fr]">
          <button className="pr-[10px] text-[42px] text-[#5c6c72]">= \ &lt;</button>
          {[..."*\"':;!?"].map((k) => <Key key={k}>{k}</Key>)}
          <button aria-label="Backspace" className="flex items-center justify-center pb-1 pl-[10px]">
            <Backspace fill="#828b8f" cross="#ebeff2" className="h-[54px] w-[72px]" />
          </button>
        </div>
        <div className="grid h-[165px] grid-cols-[162fr_108fr_108fr_324fr_108fr_108fr_162fr]">
          <button className="text-[42px] text-[#5c6c72]">ABC</button>
          <Key>,</Key>
          <Key>_</Key>
          <button aria-label="Space" className="flex items-center px-[9px] pb-[2px]"><span className="h-[72px] w-full rounded-xl bg-[#d1d6d9]" /></button>
          <Key>/</Key>
          <Key>.</Key>
          <button aria-label="Enter" className="flex items-center justify-center pb-[2px]">
            <svg viewBox="0 0 108 108" className="size-[108px]"><circle cx="54" cy="54" r="54" fill="#4db6ac" /><path d="M78 41V56H29M44 40L28 56L44 72" fill="none" stroke="#fff" strokeWidth="6" /></svg>
          </button>
        </div>
      </div>
    </section>
  );
}

function NavBar() {
  return (
    <nav aria-label="System" className="relative z-10 grid h-36 shrink-0 grid-cols-3 bg-black px-[90px] text-[#e6e6e6]">
      <button aria-label="Back" className="flex items-center justify-center"><svg viewBox="0 0 60 60" className="size-[60px]" fill="none" stroke="currentColor" strokeWidth="6" strokeLinejoin="round"><path d="M5 9H55L30 51Z" /></svg></button>
      <button aria-label="Home" className="flex items-center justify-center"><svg viewBox="0 0 60 60" className="size-[60px]" fill="none" stroke="currentColor" strokeWidth="6"><circle cx="30" cy="30" r="25" /></svg></button>
      <button aria-label="Recent apps" className="flex items-center justify-center"><svg viewBox="0 0 60 60" className="size-[60px]" fill="none" stroke="currentColor" strokeWidth="6" strokeLinejoin="round"><path d="M8 8H52V52H8Z" /></svg></button>
    </nav>
  );
}

export default function App() {
  return (
    <div className="flex h-screen flex-col overflow-hidden font-[Roboto,sans-serif]">
      <Header />
      <main className="relative flex min-h-0 flex-1 flex-col bg-linear-to-b from-[#ecebe5] via-[#eeeae4] via-40% to-[#eee6dc] to-75%">
        <Wallpaper />
        <ul className="relative flex min-h-0 flex-1 flex-col items-end justify-end gap-2 pr-[52px]">
          {[1, 2, 3, 4, 5, 6].map((n) => <Message key={n} />)}
        </ul>
        <Composer />
      </main>
      <Keyboard />
      <NavBar />
    </div>
  );
}
